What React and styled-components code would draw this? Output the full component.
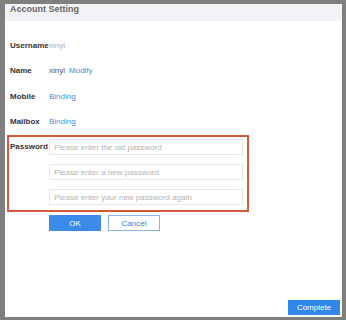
import React from 'react';
import styled, { createGlobalStyle } from 'styled-components';

const GlobalStyle = createGlobalStyle`
	html, body {
		margin: 0;
		padding: 0;
		background: #7f7f7f;
		font-family: "Liberation Sans", Arial, sans-serif;
	}
	#root {
		padding: 4px 4px 3px 5px;
	}
`;

const Panel = styled.div`
	width: 337px;
	height: 313px;
	background: #fff;
	display: flex;
	flex-direction: column;
`;

const Header = styled.div`
	height: 17px;
	background: #f2f3f7;
	padding-left: 5px;
	font-size: 9px;
	font-weight: bold;
	line-height: 11px;
	color: #666;
`;

const Body = styled.div`
	padding: 11.25px 0 0 5px;
	display: flex;
	flex-direction: column;
`;

const Row = styled.div`
	height: 25.5px;
	display: flex;
	align-items: center;
	font-size: 8px;
`;

const Label = styled.span`
	width: 39px;
	flex: none;
	font-weight: bold;
	color: #333;
	white-space: nowrap;
`;

const Value = styled.span`
	color: ${p => p.muted ? '#b0b0b0' : '#555'};
	margin-right: 4px;
`;

const Link = styled.a`
	color: #4a8fdc;
	text-decoration: none;
	cursor: pointer;
`;

const PasswordBox = styled.div`
	margin: 1px 0 0 -3px;
	width: 242px;
	box-sizing: border-box;
	border: 2px solid #d5573d;
	padding: 1.75px 0 5px 1px;
	display: flex;
	font-size: 8px;
`;

const PasswordLabel = styled(Label)`
	line-height: 16px;
`;

const Inputs = styled.div`
	display: flex;
	flex-direction: column;
	gap: 9px;
`;

const Input = styled.input`
	width: 194px;
	height: 16px;
	box-sizing: border-box;
	border: 1px solid #e8e8e8;
	padding: 0 0 0 4px;
	font-family: inherit;
	font-size: 8px;
	color: #333;
	outline: none;
	&::placeholder {
		color: #b3b3b3;
	}
`;

const Actions = styled.div`
	display: flex;
	gap: 7px;
	margin: 3px 0 0 39px;
`;

const Button = styled.button`
	width: 52px;
	height: 16px;
	box-sizing: border-box;
	padding: 0;
	font-family: inherit;
	font-size: 8px;
	border: 1px solid ${p => p.secondary ? '#8db3e6' : '#3b8beb'};
	background: ${p => p.secondary ? '#fff' : '#3b8beb'};
	color: ${p => p.secondary ? '#3b7dd8' : '#fff'};
	cursor: pointer;
`;

const Footer = styled.div`
	margin-top: auto;
	display: flex;
	justify-content: flex-end;
	padding: 0 2px 2.5px 0;
`;

const CompleteButton = styled(Button)`
	height: 15px;
	background: #2f88ee;
	border-color: #2f88ee;
`;

export default function App() {
	return (
		<>
			<GlobalStyle />
			<Panel>
				<Header>Account Setting</Header>
				<Body>
					<Row>
						<Label>Username</Label>
						<Value muted>xinyi</Value>
					</Row>
					<Row>
						<Label>Name</Label>
						<Value>xinyi</Value>
						<Link>Modify</Link>
					</Row>
					<Row>
						<Label>Mobile</Label>
						<Link>Binding</Link>
					</Row>
					<Row>
						<Label>Mailbox</Label>
						<Link>Binding</Link>
					</Row>
					<PasswordBox>
						<PasswordLabel>Password</PasswordLabel>
						<Inputs>
							<Input type="password" placeholder="Please enter the old password" />
							<Input type="password" placeholder="Please enter a new password" />
							<Input type="password" placeholder="Please enter your new password again" />
						</Inputs>
					</PasswordBox>
					<Actions>
						<Button>OK</Button>
						<Button secondary>Cancel</Button>
					</Actions>
				</Body>
				<Footer>
					<CompleteButton>Complete</CompleteButton>
				</Footer>
			</Panel>
		</>
	);
}
